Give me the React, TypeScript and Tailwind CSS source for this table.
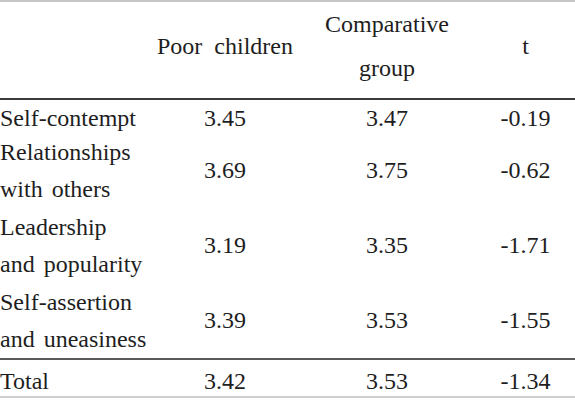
const rows = [
  { label: ["Self-contempt"], a: "3.45", b: "3.47", t: "-0.19" },
  { label: ["Relationships", "with others"], a: "3.69", b: "3.75", t: "-0.62" },
  { label: ["Leadership", "and popularity"], a: "3.19", b: "3.35", t: "-1.71" },
  { label: ["Self-assertion", "and uneasiness"], a: "3.39", b: "3.53", t: "-1.55" },
];

const cols = "grid grid-cols-[152px_146px_178px_1fr] items-center";
const serif = "font-['Liberation_Serif','Times_New_Roman',serif]";

function Cell({ children, center = true }: { children: React.ReactNode; center?: boolean }) {
  return <div className={center ? "text-center" : ""}>{children}</div>;
}

export default function App() {
  return (
    <div className={`w-[575px] h-[400px] bg-white text-[#1e1e1e] text-[24px] whitespace-pre ${serif}`}>
      <div className="border-t-2 border-[#c6c6c6]" />

      {/* 머리글 */}
      <div className={`${cols} h-[98px] pb-[8px] border-b-2 border-[#3c3c3c] leading-[44px]`}>
        <div />
        <Cell>Poor  children</Cell>
        <div className="text-center flex flex-col">
          <span>Comparative</span>
          <span>group</span>
        </div>
        <Cell>t</Cell>
      </div>

      {rows.map((r) => (
        <div
          key={r.label[0]}
          className={`${cols} ${r.label.length > 1 ? "h-[75px]" : "h-[33px]"} leading-[37px]`}
        >
          <div className="flex flex-col [word-spacing:3px]">
            {r.label.map((l) => (
              <span key={l}>{l}</span>
            ))}
          </div>
          <Cell>{r.a}</Cell>
          <Cell>{r.b}</Cell>
          <Cell>{r.t}</Cell>
        </div>
      ))}

      <div className={`${cols} h-[40px] pt-[3px] border-t-2 border-[#5a5a5a] border-b-2 border-b-[#cfcfcf]`}>
        <Cell center={false}>Total</Cell>
        <Cell>3.42</Cell>
        <Cell>3.53</Cell>
        <Cell>-1.34</Cell>
      </div>
    </div>
  );
}
